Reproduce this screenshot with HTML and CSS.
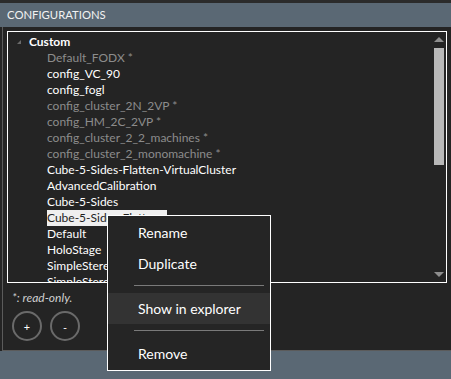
FILE: index.html
```html
<!DOCTYPE html>
<html lang="en">
<head>
    <meta charset="UTF-8">
    <title>Configurations</title>
    <link rel="stylesheet" href="styles.css">
</head>
<body>

<div class="top-strip"></div>
<div class="header">CONFIGURATIONS</div>

<div class="panel">
    <div class="list-box">
        <div class="tree">
            <div class="row group"><span class="caret"></span>Custom</div>
            <div class="row child ro">Default_FODX *</div>
            <div class="row child">config_VC_90</div>
            <div class="row child">config_fogl</div>
            <div class="row child ro">config_cluster_2N_2VP *</div>
            <div class="row child ro">config_HM_2C_2VP *</div>
            <div class="row child ro">config_cluster_2_2_machines *</div>
            <div class="row child ro">config_cluster_2_monomachine *</div>
            <div class="row child">Cube-5-Sides-Flatten-VirtualCluster</div>
            <div class="row child">AdvancedCalibration</div>
            <div class="row child">Cube-5-Sides</div>
            <div class="row child"><span class="selected">Cube-5-Sides-Flatten</span></div>
            <div class="row child">Default</div>
            <div class="row child">HoloStage</div>
            <div class="row child">SimpleStereo</div>
            <div class="row child">SimpleStereoVR</div>
        </div>
        <div class="scrollbar">
            <div class="arrow up"></div>
            <div class="track"><div class="thumb"></div></div>
            <div class="arrow down"></div>
        </div>
    </div>

    <div class="note">*: read-only.</div>

    <div class="buttons">
        <button class="round">+</button>
        <button class="round">-</button>
    </div>
</div>

<div class="footer"></div>

<div class="menu">
    <div class="item">Rename</div>
    <div class="item">Duplicate</div>
    <div class="sep"></div>
    <div class="item hover">Show in explorer</div>
    <div class="sep"></div>
    <div class="item">Remove</div>
</div>

</body>
</html>
```

FILE: styles.css
```css
body {
    margin: 0;
    width: 451px;
    height: 379px;
    overflow: hidden;
    position: relative;
    background-color: #242424;
    font-family: Lato, "Noto Sans", sans-serif;
    color: #ffffff;
}
.top-strip {
    height: 3px;
    background-color: #2b2b2b;
}
.header {
    height: 24px;
    line-height: 24px;
    padding-left: 7px;
    background-color: #5a6874;
    font-size: 11.3px;
    color: #f2f2f2;
}
.panel {
    margin-left: 2px;
    height: 324px;
    box-sizing: border-box;
    border-left: 1px solid #5b5b5b;
    border-bottom: 1px solid #5b5b5b;
    padding: 4px 0 0 4px;
}
.list-box {
    width: 440px;
    height: 252px;
    box-sizing: border-box;
    border: 1px solid #ffffff;
    display: flex;
    overflow: hidden;
}
.tree {
    flex: 1;
    padding-top: 2px;
    overflow: hidden;
}
.row {
    height: 16px;
    line-height: 16px;
    font-size: 12px;
    white-space: nowrap;
}
.group {
    display: flex;
    align-items: center;
    padding-left: 9px;
    font-weight: bold;
}
.caret {
    width: 0;
    height: 0;
    border-left: 4px solid transparent;
    border-bottom: 4px solid #6a6a6a;
    margin-right: 8px;
}
.child {
    padding-left: 39px;
}
.ro {
    color: #8c8c8c;
}
.selected {
    display: inline-block;
    background-color: #efefef;
    color: #1e1e1e;
    padding-right: 8px;
}
.scrollbar {
    width: 10px;
    margin: 5px 2px 5px 0;
    display: flex;
    flex-direction: column;
}
.arrow {
    width: 0;
    height: 0;
    margin: 0 auto;
    border-left: 5px solid transparent;
    border-right: 5px solid transparent;
}
.arrow.up {
    border-bottom: 5px solid #8e8e8e;
}
.arrow.down {
    border-top: 5px solid #8e8e8e;
}
.track {
    flex: 1;
    padding: 6px 0;
}
.thumb {
    height: 117px;
    background-color: #b8b8b8;
}
.note {
    margin: 7px 0 0 5px;
    font-size: 12px;
    font-style: italic;
    color: #d0d0d0;
}
.buttons {
    display: flex;
    gap: 8px;
    margin: 6px 0 0 5px;
}
.round {
    width: 30px;
    height: 30px;
    border-radius: 50%;
    border: 2px solid #6a6a6a;
    background: transparent;
    color: #ffffff;
    font-family: "Noto Sans", sans-serif;
    font-size: 11px;
    padding: 0;
}
.footer {
    height: 28px;
    background-color: #5a6874;
}
.menu {
    position: absolute;
    left: 107px;
    top: 215px;
    width: 164px;
    height: 156px;
    box-sizing: border-box;
    border: 1px solid #ffffff;
    background-color: #252525;
    padding-top: 1px;
    font-size: 14px;
}
.item {
    height: 31px;
    line-height: 31px;
    padding-left: 30px;
}
.item.hover {
    background-color: #333333;
}
.sep {
    height: 1px;
    margin: 6px 6px 7px 26px;
    background-color: #7a7a7a;
}
```
